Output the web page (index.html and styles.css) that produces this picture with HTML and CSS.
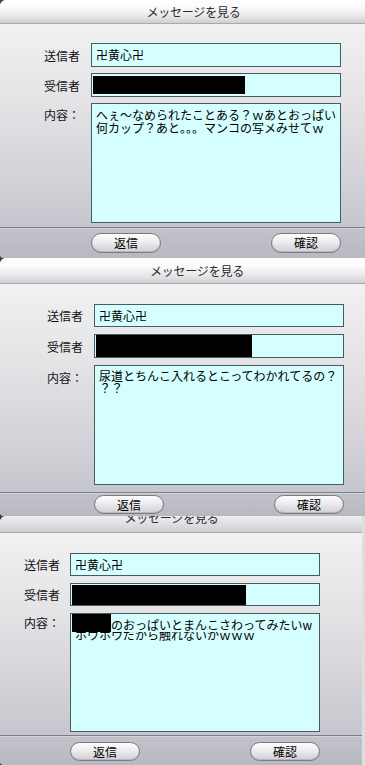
FILE: index.html
```html
<!DOCTYPE html>
<html lang="ja">
<head>
<meta charset="utf-8">
<title>メッセージを見る</title>
<link rel="stylesheet" href="styles.css">
</head>
<body>
<main class="stack">

  <section class="dialog dialog--a">
    <header class="titlebar"><h1 class="title">メッセージを見る</h1></header>
    <div class="form">
      <span class="label">送信者</span>
      <div class="field field--line">卍黄心卍</div>
      <span class="label">受信者</span>
      <div class="field field--line"><span class="redact"></span></div>
      <span class="label label--top">内容：</span>
      <div class="field field--area">
        <p class="line">へぇ～なめられたことある？ｗあとおっぱい</p>
        <p class="line">何カップ？あと。。。マンコの写メみせてｗ</p>
      </div>
    </div>
    <footer class="footer">
      <div class="actions">
        <button class="btn" type="button">返信</button>
        <button class="btn" type="button">確認</button>
      </div>
    </footer>
  </section>

  <section class="dialog dialog--b">
    <header class="titlebar"><h1 class="title">メッセージを見る</h1></header>
    <div class="form">
      <span class="label">送信者</span>
      <div class="field field--line">卍黄心卍</div>
      <span class="label">受信者</span>
      <div class="field field--line"><span class="redact"></span></div>
      <span class="label label--top">内容：</span>
      <div class="field field--area">
        <p class="line">尿道とちんこ入れるとこってわかれてるの？</p>
        <p class="line">？？</p>
      </div>
    </div>
    <footer class="footer">
      <div class="actions">
        <button class="btn" type="button">返信</button>
        <button class="btn" type="button">確認</button>
      </div>
    </footer>
  </section>

  <section class="dialog dialog--c">
    <header class="titlebar"><h1 class="title">メッセージを見る</h1></header>
    <div class="form">
      <span class="label">送信者</span>
      <div class="field field--line">卍黄心卍</div>
      <span class="label">受信者</span>
      <div class="field field--line"><span class="redact"></span></div>
      <span class="label label--top">内容：</span>
      <div class="field field--area">
        <p class="line line--cover"><span class="redact redact--name"></span><span>のおっぱいとまんこさわってみたいw</span></p>
        <p class="line line--under">ホウホウだから触れないかｗｗｗ</p>
      </div>
    </div>
    <footer class="footer">
      <div class="actions">
        <button class="btn" type="button">返信</button>
        <button class="btn" type="button">確認</button>
      </div>
    </footer>
  </section>

</main>
</body>
</html>
```

FILE: styles.css
```css
* {
  box-sizing: border-box;
}

html,
body {
  margin: 0;
  padding: 0;
  background: #3c3c3e;
}

body {
  width: 365px;
  height: 765px;
  overflow: hidden;
  font-family: "Noto Sans CJK JP", "Noto Sans", sans-serif;
  font-size: 12px;
  color: #000;
}

.stack {
  display: flex;
  flex-direction: column;
}

/* ---------- dialog shell ---------- */
.dialog {
  display: flex;
  flex-direction: column;
  border-top-left-radius: 6px;
  border-bottom-left-radius: 4px;
  overflow: hidden;
  background: #eeeeef;
}

.titlebar {
  height: var(--title-h);
  overflow: hidden;
  border-bottom: 1px solid #a9a9b0;
  background: linear-gradient(#ffffff 0%, #fafafa 35%, #e4e4e7 75%, #cfcfd4 100%);
  padding-left: var(--title-shift, 0px);
  padding-right: var(--title-shift-r, 0px);
}

.title {
  margin: var(--title-mt, 0px) 0 0;
  font-size: 12px;
  font-weight: 400;
  line-height: var(--title-lh);
  text-align: center;
  color: #2a2a2a;
  letter-spacing: -0.2px;
}

/* ---------- form grid ---------- */
.form {
  display: grid;
  grid-template-columns: 36px 250px;
  grid-template-rows: var(--r1) var(--r2) var(--r3);
  column-gap: var(--col-gap);
  row-gap: var(--row-gap);
  padding: var(--pad-top) 0 var(--pad-bottom) var(--label-x);
  background: linear-gradient(#f1f1f2 0%, #e3e3e6 40%, #c6c6ce 100%);
}

.label {
  align-self: center;
  line-height: 13px;
  white-space: nowrap;
  color: #111;
}

.label--top {
  align-self: start;
  padding-top: var(--label-pad);
}

.field {
  border: 1px solid #4b5a62;
  background: #d5fefe;
  white-space: nowrap;
  overflow: hidden;
}

.field--line {
  display: flex;
  align-items: center;
  padding-left: 4px;
  line-height: 14px;
}

.field--area {
  padding: var(--area-pad) 0 0 4px;
}

.line {
  margin: 0;
  line-height: var(--lh);
  white-space: nowrap;
}

.redact {
  display: block;
  width: var(--redact-w);
  height: var(--redact-h);
  margin-left: -3px;
  background: #000;
}

/* ---------- footer ---------- */
.footer {
  border-top: 1px solid #7d7d86;
  box-shadow: inset 0 1px 0 #d4d4da;
  background: linear-gradient(#c2c2ca, #b8b8c0);
  padding: var(--foot-pt) 0 var(--foot-pb) var(--field-x);
}

.actions {
  width: 250px;
  display: flex;
  justify-content: space-between;
}

.btn {
  width: 70px;
  height: var(--btn-h);
  padding: 0;
  border: 1px solid #7b7b82;
  border-radius: 10px;
  background: linear-gradient(#fdfdfd 0%, #ececef 45%, #cfcfd5 100%);
  box-shadow: inset 0 -1px 0 #b7b7be;
  font-family: "Noto Sans CJK JP", "Noto Sans", sans-serif;
  font-size: 12px;
  line-height: 1;
  color: #000;
}

/* ---------- variants ---------- */
.dialog--a {
  --title-h: 24px;
  --title-lh: 23px;
  --title-shift: 22px;
  --label-x: 44px;
  --field-x: 91px;
  --col-gap: 11px;
  --pad-top: 19px;
  --pad-bottom: 4px;
  --row-gap: 6px;
  --r1: 24px;
  --r2: 24px;
  --r3: 120px;
  --label-pad: 5px;
  --area-pad: 4px;
  --lh: 13px;
  --foot-pt: 5px;
  --foot-pb: 5px;
  --btn-h: 20px;
  height: 258px;
}

.dialog--a .redact {
  --redact-w: 152px;
  --redact-h: 18px;
}

.dialog--b {
  --title-h: 27px;
  --title-lh: 26px;
  --title-shift: 29px;
  --label-x: 47px;
  --field-x: 94px;
  --col-gap: 11px;
  --pad-top: 20px;
  --pad-bottom: 7px;
  --row-gap: 7px;
  --r1: 23px;
  --r2: 24px;
  --r3: 120px;
  --label-pad: 6px;
  --area-pad: 4px;
  --lh: 12px;
  --foot-pt: 2px;
  --foot-pb: 2px;
  --btn-h: 19px;
  height: 258px;
}

.dialog--b .redact {
  --redact-w: 156px;
  --redact-h: 22px;
}

.dialog--c {
  --title-h: 17px;
  --title-lh: 16px;
  --title-mt: -6px;
  --title-shift-r: 19px;
  --label-x: 24px;
  --field-x: 70px;
  --col-gap: 10px;
  --pad-top: 20px;
  --pad-bottom: 3px;
  --row-gap: 7px;
  --r1: 23px;
  --r2: 23px;
  --r3: 119px;
  --label-pad: 3px;
  --area-pad: 0px;
  --lh: 13px;
  --foot-pt: 6px;
  --foot-pb: 4px;
  --btn-h: 19px;
  width: 365px;
  border-right: 3px solid #dedee0;
  box-shadow: inset -1px 0 0 #8c8c94;
}

.dialog--c .titlebar {
  background: linear-gradient(#eeeef0 0%, #dcdce0 60%, #cdcdd2 100%);
}

.dialog--c .redact {
  --redact-w: 174px;
  --redact-h: 20px;
}

.dialog--c .redact--name {
  --redact-w: 39px;
  --redact-h: 18px;
  flex: none;
}

.line--cover {
  position: relative;
  display: flex;
  align-items: flex-end;
  height: 18px;
  line-height: 15px;
  background: #d5fefe;
}

.line--under {
  margin-top: -4px;
}
```
